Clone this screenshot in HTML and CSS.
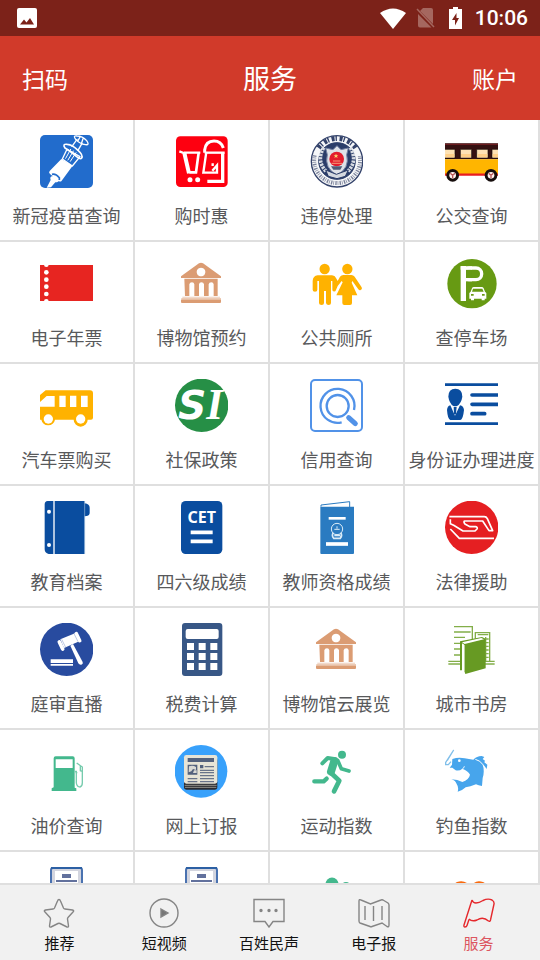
FILE: index.html
```html
<!DOCTYPE html>
<html lang="zh-CN">
<head>
<meta charset="utf-8">
<meta name="viewport" content="width=device-width, initial-scale=1">
<title>服务</title>
<link rel="stylesheet" href="styles.css">
</head>
<body>
<svg class="defs" aria-hidden="true">
  <symbol id="museum" viewBox="525 45 159 159">
    <g fill="#db9c73">
      <path fill-rule="evenodd" d="M543 103 L597 64 Q603 61 609 64 L663 103 V108 H543Z M603 77 a13 13 0 1 0 .1 0Z"/>
      <path d="M553 110 H653 V162 H641 V127 Q640 121 634 121 Q627 121 626 127 V162 H612 V127 Q611 121 604 121 Q598 121 597 127 V162 H583 V127 Q582 121 576 121 Q569 121 568 127 V162 H555Z"/>
      <path d="M547 164 H660 V167 H547Z" opacity=".5"/>
      <path d="M544 169 H663 V173 H544Z" opacity=".7"/>
      <path d="M543 173 H663 V180 Q663 183 660 183 H546 Q543 183 543 180Z"/>
    </g>
  </symbol>
  <symbol id="cabinet" viewBox="0 0 53 53">
    <rect x="11" y="1" width="31" height="50" rx="2" fill="#d3d5df" stroke="#4a72b0" stroke-width="2"/>
    <path d="M11 1 H42" stroke="#2c60a4" stroke-width="2"/>
    <rect x="15" y="4" width="23" height="44" fill="#fff"/>
    <rect x="22" y="7" width="9" height="4" fill="#62719d"/>
    <path d="M16 14 H37" stroke="#62719d" stroke-width="2"/>
  </symbol>
</svg>
<div class="app">
  <div class="status">
    <svg class="status-photo" viewBox="0 0 20 20" width="20" height="20"><rect y="0" width="20" height="20" rx="2" fill="#fff"/><path d="M3 16.500 L7 11.500 L9.500 14.500 L13 10 L17 16.500Z" fill="#7c2219"/></svg>
    <svg viewBox="0 0 26 21" width="26" height="21"><path d="M0 5 Q13 -4 26 5 L13 21Z" fill="#fff"/></svg>
    <svg viewBox="0 0 20 20" width="20" height="20"><path d="M7 0 H15 Q17 0 17 2 V16 L4 3Z M2 6 L15.500 19.500 H4 Q2 19.500 2 17.500Z" fill="#a5675f"/><path d="M1 1 L18 19" stroke="#a5675f" stroke-width="1.500"/></svg>
    <svg viewBox="0 0 19 22" width="19" height="22"><path d="M7 0 H12 V2 H16 V22 H3 V2 H7Z" fill="#fff"/><path d="M10.500 6 L6 13 H9 V18.500 L13 11 H10.500Z" fill="#7c2219"/></svg>
    <time>10:06</time>
  </div>
  <header class="bar">
    <button type="button">扫码</button>
    <h1>服务</h1>
    <button type="button">账户</button>
  </header>
  <main class="grid">
    <a class="cell" href="#"><svg viewBox="120 45 159 159"><rect x="120" y="45" width="159" height="159" rx="15" fill="#226ccc"/>
      <g fill="none" stroke="#fff" stroke-linejoin="round" stroke-linecap="round">
        <path d="M187 117 L201 88 L240 110 L217 138Z" stroke-width="4"/>
        <path d="M197 115 L212 88 M204 120 L220 93 M211 124 L228 98" stroke-width="3"/>
        <path d="M195 84 Q186 71 202 73 Q217 74 234 91 Q250 105 245 114 Q241 119 230 110 Q211 93 195 84Z" stroke-width="5"/>
        <path d="M216 79 L231 58 M234 91 L246 70" stroke-width="4"/>
        <path d="M227 58 Q218 46 231 48 Q247 48 260 62 Q270 76 256 74 Q240 72 227 58Z M240 51 L234 62 M249 56 L245 68" stroke-width="4"/>
      </g>
      <path d="M184 117 L218 137 L185 182 Q182 187 176 183 L150 162 Q145 158 149 153Z M152 180 Q148 170 158 168 L177 179 Q178 186 166 187 L153 202 L140 203Z" fill="#fff"/>
      <path d="M156 163 Q167 160 178 173 V180" fill="none" stroke="#226ccc" stroke-width="5"/></svg><span>新冠疫苗查询</span></a>

    <a class="cell" href="#"><svg viewBox="525 45 159 159"><rect x="528" y="49" width="155" height="152" rx="13" fill="#fe0010"/>
      <g fill="none" stroke="#fff"><path d="M538 94 L559 102 M552 98 H601" stroke-width="7"/><path d="M553 99 L567 160" stroke-width="12"/><path d="M596 98 L588 157 H568" stroke-width="8"/>
      <path d="M614 98 V90 Q617 63 642 63 Q663 63 670 84" stroke-width="9"/><path d="M614 98 H674" stroke-width="7"/><path d="M619 96 L610 158 H651 V136 L637 152 M638 130 V138" stroke-width="7"/><path d="M668 98 V184 H622" stroke-width="10"/></g>
      <circle cx="570" cy="179" r="7.500" fill="#fff"/><circle cx="593" cy="179" r="7.500" fill="#fff"/></svg><span>购时惠</span></a>

    <a class="cell" href="#"><svg viewBox="120 45 159 159"><circle cx="201" cy="124" r="77" fill="#f5f6f8" stroke="#34436b" stroke-width="4"/>
      <path d="M146 84 A68 68 0 0 1 257 84" fill="none" stroke="#34436b" stroke-width="15" stroke-dasharray="9 3 4 8"/>
      <path d="M134 106 A69 69 0 1 0 269 106" fill="none" stroke="#7a829a" stroke-width="12" stroke-dasharray="4 3 2 4"/>
      <circle cx="201" cy="123" r="55" fill="#2b3d69" stroke="#2b3d69" stroke-width="3"/>
      <path d="M161 83 Q138 123 169 155 M241 83 Q264 123 233 155" fill="none" stroke="#d8dce3" stroke-width="11" stroke-dasharray="7 3"/>
      <path d="M201 77 L213 89 L235 84 L230 104 Q240 145 201 165 Q162 145 172 104 L167 84 L189 89Z" fill="#dfe2e8" stroke="#7380a1" stroke-width="3"/>
      <path d="M167 150 L199 163 L235 150 L226 169 L201 176 L175 169Z" fill="#d4d8df" stroke="#2b3d69" stroke-width="3"/>
      <circle cx="200" cy="117" r="22" fill="#e31d2d"/><path d="M189 123 H211 M185 130 H216" stroke="#f59a78" stroke-width="3"/><path d="M198 101 L200 106 L205 106 L201 109 L203 114 L198 111 L193 114 L195 109 L191 106 H196Z" fill="#fbd66d"/><path d="M183 139 H217 L211 149 H190Z" fill="#515b77"/></svg><span>违停处理</span></a>

    <a class="cell" href="#"><svg viewBox="525 45 159 159"><path d="M525 70 H684 V118 H525Z" fill="#351111"/><path d="M525 73 H684" stroke="#6d1d20" stroke-width="4"/><path d="M525 118 H684 V164 H525Z" fill="#ffb500"/><path d="M525 164 H684" stroke="#e81d20" stroke-width="7"/>
      <g fill="#fee2b4" stroke="#130b0b" stroke-width="2"><path d="M523 88 H555 V114 H523Z M571 88 H605 V114 H571Z M620 88 H654 V114 H620Z M666 88 H686 V114 H666Z"/></g><path d="M526 107 H553 M573 107 H603 M622 107 H652 M668 107 H684" stroke="#ffd08a" stroke-width="10"/>
      <circle cx="548" cy="166" r="19" fill="#160d0c"/><circle cx="548" cy="166" r="10" fill="#fff3ef"/><circle cx="663" cy="166" r="19" fill="#160d0c"/><circle cx="663" cy="166" r="10" fill="#fff3ef"/>
      <path d="M541 160 L548 166 L555 160 M548 166 V175 M656 160 L663 166 L670 160 M663 166 V175" fill="none" stroke="#b65a59" stroke-width="4"/></svg><span>公交查询</span></a>

    <a class="cell" href="#"><svg viewBox="120 45 159 159"><path d="M120 69 H279 V177 H120Z" fill="#e72521"/><g fill="#fff"><path d="M132 68 H146 A7 7 0 0 1 132 68Z M132 178 H146 A7 7 0 0 0 132 178Z"/><circle cx="139" cy="91" r="7"/><circle cx="139" cy="113" r="7"/><circle cx="139" cy="134" r="7"/><circle cx="139" cy="156" r="7"/></g></svg><span>电子年票</span></a>

    <a class="cell" href="#"><svg><use href="#museum"/></svg><span>博物馆预约</span></a>

    <a class="cell" href="#"><svg viewBox="120 45 159 159"><g fill="#ffb200"><circle cx="164" cy="81" r="15.500"/><circle cx="232" cy="81" r="15.500"/>
      <path d="M143 100 H186 Q195 100 198 108 L203 117 L210 104 Q214 99 220 99 H244 Q250 99 254 104 L275 136 Q278 142 272 144 Q268 146 265 142 L247 117 L245 122 L262 160 H246 V183 Q246 189 240 189 H223 Q217 189 217 183 V160 H199 L218 121 L215 117 L203 132 L198 144 Q196 150 190 148 Q186 146 187 140 V117 H183 V183 Q183 189 176 189 Q169 189 168 183 V147 H162 V183 Q162 189 155 189 Q147 189 147 183 V117 H142 V143 Q142 149 135 149 Q128 149 128 143 V116 Q129 102 143 100Z"/></g></svg><span>公共厕所</span></a>

    <a class="cell" href="#"><svg viewBox="525 45 159 159"><circle cx="606" cy="125" r="74" fill="#679a13"/><rect x="572" y="72" width="16" height="105" fill="#fff"/><rect x="580" y="78" width="55" height="35" rx="17" fill="none" stroke="#fff" stroke-width="10"/><rect x="588" y="83" width="16" height="25" fill="#679a13"/><rect x="572" y="73" width="34" height="10" fill="#fff"/><rect x="586" y="108" width="20" height="10" fill="#fff"/>
      <path fill-rule="evenodd" fill="#fff" d="M606 139 Q607 135 612 135 H635 Q639 135 641 139 L645 149 L649 153 V170 H644 V175 H635 V170 H612 V175 H603 V170 H598 V153 L602 149Z M609 140 L606 149 H641 L637 140Z M603 156 H611 V161 H603Z M636 156 H644 V161 H636Z"/></svg><span>查停车场</span></a>

    <a class="cell" href="#"><svg viewBox="120 45 159 159"><path fill="#ffb200" d="M120 93 L137 79 H270 Q279 79 279 88 V161 Q279 167 273 167 H263 A21 21 0 0 1 221 167 H165 A21 21 0 0 1 124 167 H120Z"/><g fill="#fff"><path d="M120 114 L140 96 H164 V128 H120Z M178 95 H197 V129 H178Z M210 95 H229 V129 H210Z M243 95 H263 V129 H243Z"/><circle cx="145" cy="165" r="14"/><circle cx="242" cy="165" r="14"/></g></svg><span>汽车票购买</span></a>

    <a class="cell" href="#"><svg viewBox="525 45 159 159"><circle cx="605" cy="124" r="80" fill="#268f46"/><text class="si" x="534" y="164">S<tspan class="si-serif">I</tspan></text></svg><span>社保政策</span></a>

    <a class="cell" href="#"><svg viewBox="120 45 159 159"><g fill="none" stroke="#5192e8"><rect x="123" y="48" width="153" height="153" rx="12" stroke-width="6"/><circle cx="203" cy="126" r="33" stroke-width="7"/><path d="M215 175 A51 51 0 1 1 252 138" stroke-width="7"/><path d="M236 161 L256 179" stroke-width="15" stroke-linecap="round"/></g></svg><span>信用查询</span></a>

    <a class="cell" href="#"><svg viewBox="525 45 159 159"><g stroke="#0a4d9f"><path d="M525 62 H684 M525 179 H684" stroke-width="8"/><path d="M606 93 H684 M606 121 H684 M606 149 H644" stroke-width="11" stroke-linecap="round"/></g><g fill="#0a4d9f"><path d="M556 74 Q577 74 577 98 Q574 118 561 126 H550 Q538 118 535 98 Q535 74 556 74Z"/><path d="M541 124 L555 155 L570 124 Q581 126 582 138 Q579 167 571 168 H541 Q533 166 531 138 Q532 126 541 124Z"/><path d="M551 128 H560 L558 148 L555 153 L552 148Z"/></g></svg><span>身份证办理进度</span></a>

    <a class="cell" href="#"><svg viewBox="120 45 159 159"><path fill="#0a4d9f" d="M143 45 H254 V52 Q269 54 269 65 V82 Q268 91 254 91 V204 H146 Q134 201 134 190 V55 Q134 46 143 45Z"/><path d="M162 45 V204" stroke="#fff" stroke-width="4"/><path d="M254 45 V204" stroke="#9fbddb" stroke-width="2"/><circle cx="147" cy="77" r="6" fill="#fff"/><circle cx="147" cy="177" r="6" fill="#fff"/></svg><span>教育档案</span></a>

    <a class="cell" href="#"><svg viewBox="525 45 159 159"><rect x="543" y="45" width="124" height="159" rx="14" fill="#0a4d9f"/><text class="cet" x="605" y="111">CET</text><path d="M572 139 H638 M572 166 H638" stroke="#fff" stroke-width="11"/></svg><span>四六级成绩</span></a>

    <a class="cell" href="#"><svg viewBox="120 45 159 159"><path d="M153 62 V57 L239 47 V64" fill="#fff" stroke="#2a7bc1" stroke-width="3"/><path d="M151 62 H252 V201 Q252 204 249 204 H154 Q151 204 151 201Z" fill="#2a7bc1"/><path d="M176 97 H227" stroke="#fff" stroke-width="8"/><path d="M168 174 H234" stroke="#fff" stroke-width="11"/><g fill="none" stroke="#d9ebf7"><circle cx="201" cy="129" r="17" stroke-width="3"/><path d="M190 140 Q184 148 191 157 H211 Q218 148 212 140 M193 148 H210" stroke-width="5"/><path d="M201 121 V128 M193 130 H209" stroke-width="3"/></g></svg><span>教师资格成绩</span></a>

    <a class="cell" href="#"><svg viewBox="525 45 159 159"><circle cx="605" cy="124" r="80" fill="#e51f22"/><g fill="none" stroke="#fff" stroke-width="5" stroke-linejoin="round"><path d="M538 92 H643 Q649 92 652 98 L668 134 H657 L638 105 H583 Q580 109 586 115 L600 122 H617 Q624 124 621 129 L615 135 H579 L551 118 L541 113 V100"/><path d="M541 129 L568 157 H672"/></g></svg><span>法律援助</span></a>

    <a class="cell" href="#"><svg viewBox="120 45 159 159"><circle cx="200" cy="124" r="80" fill="#284b9f"/><g fill="#fff"><path d="M152 154 H219 V165 H152Z M152 168 H219 V173 H152Z"/><path d="M211 113 L219 108 L248 162 Q250 168 244 170 Q238 171 235 166Z"/><path d="M181 94 L225 76 L238 100 L192 120Z"/></g><g stroke="#fff" stroke-width="11" stroke-linecap="round"><path d="M178 102 L188 123 M229 77 L239 98"/></g><path d="M185 94 L197 118 M222 77 L234 101" stroke="#9aacd2" stroke-width="2"/></svg><span>庭审直播</span></a>

    <a class="cell" href="#"><svg viewBox="525 45 159 159"><rect x="546" y="45" width="121" height="159" rx="9" fill="#385786"/><g fill="#fff"><rect x="557" y="63" width="99" height="30" rx="6"/><path d="M561 105 H582 V126 H561Z M596 105 H617 V126 H596Z M631 105 H652 V126 H631Z M561 135 H582 V156 H561Z M596 135 H617 V156 H596Z M631 135 H652 V156 H631Z M561 165 H582 V186 H561Z M596 165 H617 V186 H596Z M631 165 H652 V186 H631Z"/></g></svg><span>税费计算</span></a>

    <a class="cell" href="#"><svg><use href="#museum"/></svg><span>博物馆云展览</span></a>

    <a class="cell" href="#"><svg viewBox="525 45 159 159"><g fill="none" stroke="#83ae49" stroke-width="4"><path d="M552 56 H607 V94 M552 72 H602 M552 88 H585 M552 106 H575 M552 123 H575 M552 141 H575 M535 160 H575 M535 168 H575 M645 160 H674 M645 168 H674"/><path d="M616 92 V74 H659 V160 M623 80 H655 M648 93 H656 M648 104 H656 M648 115 H656 M648 126 H656 M648 137 H656 M648 148 H656 M647 87 V160"/></g><path d="M570 100 L636 87 L647 92 V181 L586 198 L583 189 V111 L576 106 V187 H570Z" fill="#679a23"/><path d="M576 103 L634 90 L642 94 L584 108Z M577 107 L583 111 V189 L577 184Z" fill="#fff"/></svg><span>城市书房</span></a>

    <a class="cell" href="#"><svg viewBox="120 411 159 159"><g fill="#43b88d"><path fill-rule="evenodd" d="M161 451 Q161 445 167 445 H218 Q224 445 224 451 V539 L229 541 V549 H155 V541 L161 538Z M167 454 V480 H218 V454Z"/></g><path d="M224 490 H229 V525 Q231 537 240 537 Q247 535 247 524 V477 L230 465 M226 494 H232 M241 473 V488 L247 490" fill="none" stroke="#76cbad" stroke-width="4"/></svg><span>油价查询</span></a>

    <a class="cell" href="#"><svg viewBox="525 411 159 159"><circle cx="603" cy="490" r="79" fill="#38a1fb"/><rect x="552" y="450" width="100" height="95" rx="8" fill="#292a30"/><path d="M554 532 H650 M555 538 H649" stroke="#c7c3b7" stroke-width="2"/><rect x="552" y="441" width="100" height="86" rx="7" fill="#e7e4d6"/><g fill="#53617c"><path d="M563 450 H642 V462 H563Z M563 470 H592 V500 H563Z M600 471 H610 V481 H600Z"/></g><path d="M567 475 Q578 470 588 477 V486 L579 483 L574 490 L566 493Z M582 487 H590 V495 H579Z" fill="#d9d9d4"/><path d="M614 476 H642 M600 487 H642 M600 494 H642 M600 503 H642 M600 512 H642 M563 512 H592 M600 521 H642 M563 521 H592" stroke="#69748a" stroke-width="4"/></svg><span>网上订报</span></a>

    <a class="cell" href="#"><svg viewBox="120 411 159 159"><circle cx="216" cy="440" r="12" fill="#43b88d"/><g fill="none" stroke="#43b88d" stroke-linecap="round" stroke-linejoin="round"><path d="M157 466 L173 450 L197 454" stroke-width="12"/><path d="M193 459 L183 491" stroke-width="24"/><path d="M203 457 L214 482 L237 489" stroke-width="11"/><path d="M184 496 L208 518 L192 550" stroke-width="14"/><path d="M170 512 L161 520 H133" stroke-width="13"/></g></svg><span>运动指数</span></a>

    <a class="cell" href="#"><svg viewBox="525 411 159 159"><path fill="#47a5ec" d="M547 453 Q566 446 584 451 L610 455 Q620 444 635 444 L643 447 L638 453 L645 458 L643 463 L652 470 L650 483 Q643 472 637 467 Q645 488 638 510 L636 534 L626 532 L618 529 Q600 536 587 538 L576 546 L563 551 Q567 538 560 528 Q557 518 544 514 Q563 514 577 522 Q597 515 600 500 Q595 489 577 482 Q568 490 557 487 L547 479 H539 L546 470Z"/><circle cx="568" cy="458" r="4" fill="#fff"/><path d="M616 454 Q630 457 639 470 M577 483 Q583 479 583 475" fill="none" stroke="#fff" stroke-width="3"/><path d="M551 426 L527 463 V470 H535 L543 461 M551 426 L532 457" fill="none" stroke="#80bfea" stroke-width="4"/></svg><span>钓鱼指数</span></a>

    <a class="cell" href="#"><svg><use href="#cabinet"/></svg></a>
    <a class="cell" href="#"><svg><use href="#cabinet"/></svg></a>
    <a class="cell" href="#"><svg viewBox="0 0 53 53"><g fill="#43b88d"><circle cx="22" cy="17" r="6.500"/><circle cx="36" cy="19" r="4"/><path d="M12 50 V34 Q12 26 22 26 Q32 26 32 34 V50Z"/></g></svg></a>
    <a class="cell" href="#"><svg viewBox="0 0 53 53"><path d="M26 48 L9 29 Q3 20 12 15 Q20 12 26 20 Q30 12 38 15 Q48 20 42 29Z" fill="#f96a0e"/></svg></a>
  </main>
  <nav class="tabs">
    <a href="#"><svg viewBox="0 0 32 30"><path d="M16 1.500 Q17 1.500 17.500 3 L20.500 10 Q21 11 22 11 L29.500 12 Q31.500 12.500 30 14 L25 19.500 Q24.500 20 24.500 21 L25.500 28 Q25.500 29.500 24 29 L17 25.500 Q16 25 15 25.500 L8 29 Q6.500 29.500 6.500 28 L7.500 21 Q7.500 20 7 19.500 L2 14 Q.500 12.500 2.500 12 L10 11 Q11 11 11.500 10 L14.500 3 Q15 1.500 16 1.500Z"/></svg><span>推荐</span></a>
    <a href="#"><svg viewBox="0 0 32 30"><circle cx="16" cy="15" r="14"/><path d="M13 11 L20 15 L13 19Z" class="solid"/></svg><span>短视频</span></a>
    <a href="#"><svg viewBox="0 0 32 30"><path d="M1 1.500 H31 V23.500 H20 L16 29 L12 23.500 H1Z"/><g class="solid"><circle cx="8" cy="12.500" r="1"/><circle cx="16" cy="12.500" r="1"/><circle cx="23" cy="12.500" r="1"/></g></svg><span>百姓民声</span></a>
    <a href="#"><svg viewBox="0 0 32 30"><path d="M1 3 Q1 1 3 2 L12.500 6 L23 2 Q24 1.500 25 2 L30 5 Q31 6 31 7 V27 Q31 29.500 29 28.500 L24 25 L14 28.500 Q13 29 12 28.500 L2 25 Q1 24.500 1 23Z M7 8 V22 M15.500 8 V23 M24 8 V22"/></svg><span>电子报</span></a>
    <a href="#" class="active" aria-current="page"><svg viewBox="0 0 32 30"><path d="M9 2 L1 27 Q.500 29 2 29 Q3.500 29 4 27.500 L6 21.500 M9 2 Q10 5 13 5 Q16 5 20 2.500 Q25 0 29 2 Q31.500 3.500 31 6 L27.500 22 Q27 24 25.500 23 Q20 18 14 22 Q9 24 6 21"/></svg><span>服务</span></a>
  </nav>
</div>
</body>
</html>
```
FILE: styles.css
```css
* {
  box-sizing: border-box;
}

body {
  margin: 0;
  font-family: "Noto Sans CJK SC", sans-serif;
  background: #fff;
}

a {
  color: inherit;
  text-decoration: none;
}

.defs {
  position: absolute;
  width: 0;
  height: 0;
}

.app {
  display: flex;
  flex-direction: column;
  height: 100vh;
}

.status {
  flex: none;
  display: flex;
  align-items: center;
  gap: 10px;
  height: 36px;
  padding: 0 12px 0 17px;
  background: #7c2219;
  color: #fff;
  font: 500 21px/36px Roboto, sans-serif;
}

.status-photo {
  margin-right: auto;
}

.bar {
  flex: none;
  display: grid;
  grid-template-columns: 1fr auto 1fr;
  align-items: center;
  height: 84px;
  padding: 0 22px;
  background: #d13a2a;
  color: #fff;
}

.bar h1 {
  margin: 0;
  font-size: 27px;
  font-weight: 400;
  line-height: 40px;
}

.bar button {
  justify-self: start;
  padding: 0;
  border: 0;
  background: none;
  color: inherit;
  font: inherit;
  font-size: 23px;
  line-height: 40px;
}

.bar button:last-child {
  justify-self: end;
}

.grid {
  flex: 1;
  min-height: 0;
  overflow: hidden;
  display: grid;
  grid-template-columns: repeat(4, 1fr);
  grid-auto-rows: 122px;
}

.cell {
  display: flex;
  flex-direction: column;
  align-items: center;
  gap: 14px;
  padding-top: 15px;
  border-right: 2px solid #dfdfdf;
  border-bottom: 2px solid #dfdfdf;
  color: #58595b;
  font-size: 18px;
  line-height: 26px;
  white-space: nowrap;
}

.cell svg {
  flex: none;
  width: 53px;
  height: 53px;
}

.si {
  fill: #fff;
  font: italic 700 118px "DejaVu Sans", sans-serif;
}

.si-serif {
  font-family: "Liberation Serif", serif;
  font-size: 130px;
}

.cet {
  fill: #fff;
  font: 700 48px "Noto Sans", sans-serif;
  text-anchor: middle;
}

.tabs {
  flex: none;
  display: grid;
  grid-template-columns: repeat(5, 1fr);
  height: 77px;
  padding: 13px 9px 0 7px;
  border-top: 2px solid #dfdfdf;
  background: #f1f1f1;
  color: #111;
}

.tabs a {
  display: flex;
  flex-direction: column;
  align-items: center;
  gap: 4px;
  font-size: 15px;
  line-height: 22px;
}

.tabs svg {
  width: 32px;
  height: 30px;
  fill: none;
  stroke: #858585;
  stroke-width: 1.4px;
}

.tabs .solid {
  fill: #777;
}

.tabs .active {
  color: #dc5560;
}

.tabs .active svg {
  stroke: #e5282c;
}
```
